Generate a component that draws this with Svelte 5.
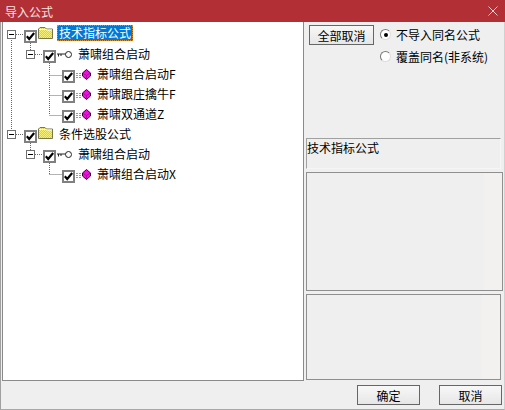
<script>
  let rows = [
    { level: 0, label: '技术指标公式', icon: 'folder', toggle: true, selected: true },
    { level: 1, label: '萧啸组合启动', icon: 'key', toggle: true },
    { level: 2, label: '萧啸组合启动F', icon: 'gem' },
    { level: 2, label: '萧啸跟庄擒牛F', icon: 'gem' },
    { level: 2, label: '萧啸双通道Z', icon: 'gem' },
    { level: 0, label: '条件选股公式', icon: 'folder', toggle: true },
    { level: 1, label: '萧啸组合启动', icon: 'key', toggle: true },
    { level: 2, label: '萧啸组合启动X', icon: 'gem' }
  ]

  // dotted tree connectors, measured from the top of the tree
  let lines = [
    'M11.5 12V112', 'M16 12.5H24', 'M30.5 21V28', 'M35 32.5H43',
    'M49.5 41V93', 'M49.5 53.5H62', 'M49.5 73.5H62', 'M49.5 93.5H62',
    'M16 112.5H24', 'M30.5 121V128', 'M35 132.5H43', 'M49.5 141V152', 'M49.5 152.5H62'
  ]
</script>

<div class="window">
  <div class="titlebar">
    <span>导入公式</span>
    <svg class="close" width="10" height="10" viewBox="0 0 10 10">
      <path d="M0.5 0.5L9.5 9.5M9.5 0.5L0.5 9.5" stroke="#e9c9cb" fill="none" />
    </svg>
  </div>

  <div class="body">
    <div class="tree">
      <svg class="lines" width="100" height="170">
        {#each lines as d}
          <path {d} stroke="#666" stroke-dasharray="1 1" fill="none" />
        {/each}
      </svg>

      {#each rows as row}
        <div class="row lv{row.level}">
          {#if row.toggle}
            <span class="toggle"></span>
          {/if}
          <span class="check">
            <svg width="9" height="9" viewBox="0 0 9 9">
              <path d="M0.8 4.2L3.2 7L8.2 1" stroke="#000" stroke-width="2.2" fill="none" />
            </svg>
          </span>

          {#if row.icon == 'folder'}
            <svg class="ico folder" width="15" height="12" viewBox="0 0 15 12">
              <defs>
                <pattern id="dither" width="2" height="2" patternUnits="userSpaceOnUse">
                  <rect width="2" height="2" fill="#f6f07a" />
                  <rect width="1" height="1" fill="#e8d800" />
                  <rect x="1" y="1" width="1" height="1" fill="#e8d800" />
                </pattern>
              </defs>
              <path d="M0.5 11.5V2L2 0.5H7L8.5 2H14.5V11.5Z" fill="url(#dither)" stroke="#77774a" />
              <path d="M1 2.5H8.5L9.5 3H14" stroke="#fff" fill="none" />
            </svg>
          {:else if row.icon == 'key'}
            <svg class="ico" width="15" height="9" viewBox="0 0 15 9">
              <path d="M0 4H9M1.5 4V6.5M4 4V6" stroke="#222" fill="none" />
              <circle cx="11.5" cy="4.5" r="3" fill="#fff" stroke="#222" />
            </svg>
          {:else}
            <svg class="ico" width="15" height="11" viewBox="0 0 15 11">
              <path d="M0 4.5H6M0 6.5H6M0 8.5H6" stroke="#999" stroke-dasharray="2 1" fill="none" />
              <path d="M10.5 0.5L14.5 4V7L10.5 10.5L6.5 7V4Z" fill="#ee10dc" stroke="#2a082a" />
              <path d="M6.5 4L10.5 6.5L14.5 4M10.5 6.5V10" stroke="#8a0a80" stroke-width="0.6" fill="none" />
            </svg>
          {/if}

          <span class="label" class:selected={row.selected}>{row.label}</span>
        </div>
      {/each}
    </div>

    <div class="side">
      <div class="options">
        <button class="btn">全部取消</button>
        <div class="radios">
          <label class="radio"><span class="dot on"></span>不导入同名公式</label>
          <label class="radio"><span class="dot"></span>覆盖同名(非系统)</label>
        </div>
      </div>
      <div class="desc">技术指标公式</div>
      <div class="panel one"></div>
      <div class="panel two"></div>
    </div>
  </div>

  <div class="footer">
    <button class="btn wide">确定</button>
    <button class="btn wide">取消</button>
  </div>
</div>

<style>
  :global(body) {
    margin: 0;
    background: #efefef;
  }

  .window {
    width: 505px;
    height: 410px;
    box-sizing: border-box;
    display: flex;
    flex-direction: column;
    background: #efefef;
    border-left: 1px solid #a0a0a0;
    border-right: 1px solid #d0d0d0;
    border-bottom: 1px solid #a8a8a8;
    font-family: "Noto Sans CJK SC", "Liberation Sans", sans-serif;
    font-size: 12px;
    color: #000;
  }

  .titlebar {
    height: 22px;
    margin: 0 -1px;
    flex: none;
    display: flex;
    align-items: center;
    justify-content: space-between;
    padding: 0 6px 0 5px;
    background: #b22f35;
    color: #f4e4e4;
  }

  .close {
    margin-right: 1px;
  }

  .body {
    flex: none;
    height: 359px;
    display: flex;
  }

  .tree {
    position: relative;
    width: 302px;
    box-sizing: border-box;
    margin-left: 1px;
    padding-top: 2px;
    background: #fff;
    border: 1px solid #8a8a8a;
    border-top: none;
  }

  .lines {
    position: absolute;
    left: -3px;
    top: 0;
  }

  .row {
    position: relative;
    height: 20px;
    display: flex;
    align-items: center;
  }

  .lv0 { padding-left: 4px; }
  .lv1 { padding-left: 23px; }
  .lv2 { padding-left: 59px; }

  .toggle {
    position: relative;
    width: 9px;
    height: 9px;
    box-sizing: border-box;
    margin-right: 8px;
    border: 1px solid #707070;
    background: #fff;
  }

  .toggle::after {
    content: "";
    position: absolute;
    left: 1px;
    right: 1px;
    top: 3px;
    height: 1px;
    background: #000;
  }

  .check {
    width: 13px;
    height: 13px;
    margin-top: 5px;
    box-sizing: border-box;
    display: flex;
    align-items: center;
    justify-content: center;
    border: 2px solid #808080;
    background: #fff;
  }

  .ico {
    margin-left: 1px;
    flex: none;
  }

  .ico.folder {
    margin-bottom: 3px;
  }

  .label {
    margin-left: 6px;
    line-height: 14px;
    white-space: nowrap;
  }

  .label.selected {
    margin-left: 4px;
    margin-bottom: 2px;
    padding: 1px 2px;
    background: #0078d7;
    color: #fff;
    outline: 1px dotted #e08a20;
    outline-offset: -1px;
  }

  .side {
    flex: 1;
    position: relative;
    display: flex;
    flex-direction: column;
    padding-left: 2px;
  }

  .options {
    height: 116px;
    display: flex;
    align-items: flex-start;
    gap: 6px;
    padding: 3px 0 0 3px;
    box-sizing: border-box;
  }

  .btn {
    width: 65px;
    height: 20px;
    padding: 0;
    border: 1px solid #666;
    background: linear-gradient(#f8f8f8, #e6e6e6);
    font: inherit;
    color: #000;
  }

  .radios {
    display: flex;
    flex-direction: column;
    gap: 5px;
    padding-top: 1px;
  }

  .radio {
    height: 17px;
    display: flex;
    align-items: center;
    gap: 5px;
    white-space: nowrap;
  }

  .dot {
    position: relative;
    width: 11px;
    height: 11px;
    box-sizing: border-box;
    border-radius: 50%;
    border: 1px solid;
    border-color: #777 #ddd #ddd #777;
    background: #fff;
  }

  .dot.on::after {
    content: "";
    position: absolute;
    left: 2.5px;
    top: 2.5px;
    width: 4px;
    height: 4px;
    border-radius: 50%;
    background: #000;
  }

  .desc {
    height: 31px;
    width: 195px;
    box-sizing: border-box;
    border: 1px solid #a0a0a0;
    border-bottom-color: #f6f6f6;
    border-right-color: #f6f6f6;
    line-height: 18px;
  }

  .panel {
    box-sizing: border-box;
    border: 1px solid #8f8f8f;
    background: #efefef;
    box-shadow: inset -18px 0 0 #f2f1f0;
  }

  .panel.one {
    width: 197px;
    height: 119px;
    margin-top: 3px;
  }

  .panel.two {
    width: 195px;
    height: 86px;
    margin-top: 3px;
  }

  .footer {
    flex: 1;
    display: flex;
    justify-content: flex-end;
    align-items: flex-start;
    gap: 19px;
    padding: 4px 2px 0 0;
  }

  .btn.wide {
    width: 63px;
    height: 20px;
  }
</style>
